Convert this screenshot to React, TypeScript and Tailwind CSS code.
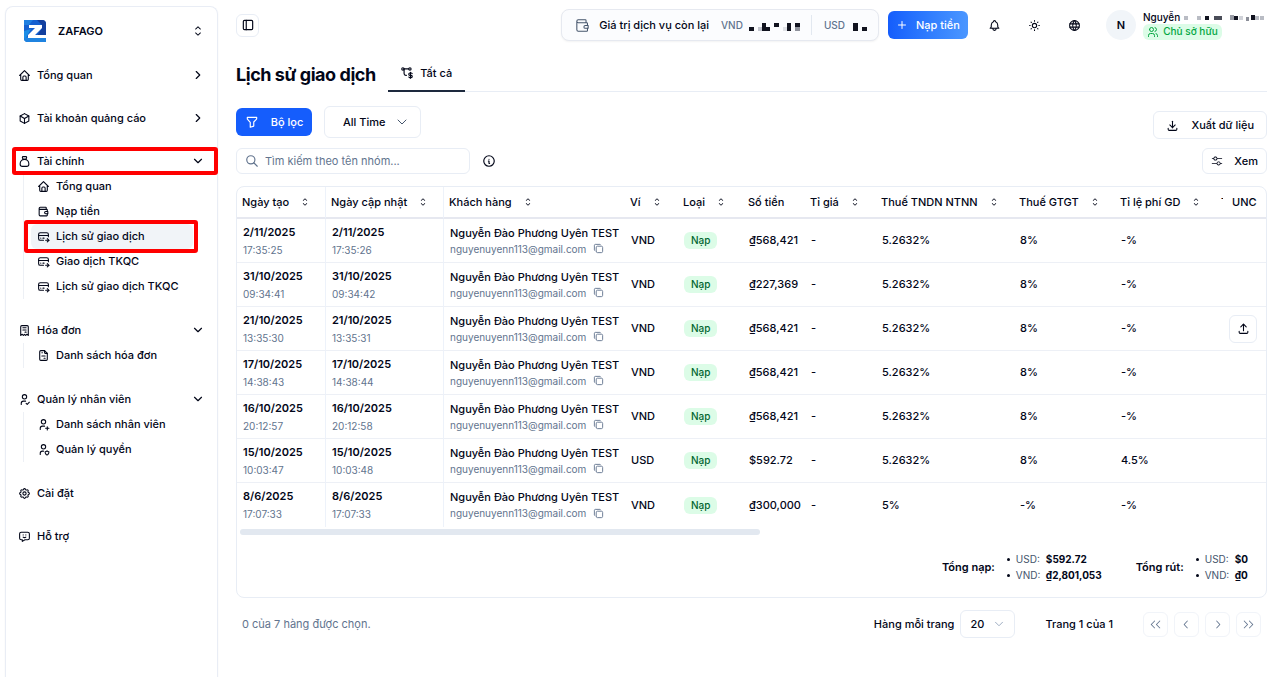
import type { FC, ReactNode } from 'react';
import type { IconType } from 'react-icons';
import {
  TbBell,
  TbBox,
  TbChevronDown,
  TbChevronRight,
  TbCopy,
  TbCreditCardPay,
  TbDownload,
  TbFileInvoice,
  TbFilter,
  TbHome,
  TbInfoCircle,
  TbLayoutSidebar,
  TbMessageChatbot,
  TbMoneybag,
  TbPlus,
  TbReceipt,
  TbSearch,
  TbSettings,
  TbSun,
  TbTransactionDollar,
  TbUpload,
  TbUserCheck,
  TbUserPlus,
  TbUserShield,
  TbUsers,
  TbWallet,
  TbWorld,
} from 'react-icons/tb';
import { RxCaretSort, RxChevronLeft, RxChevronRight, RxDoubleArrowLeft, RxDoubleArrowRight, RxMixerHorizontal } from 'react-icons/rx';

interface NavChild {
  label: string;
  icon: IconType;
  active?: boolean;
}

interface NavGroup {
  label: string;
  icon: IconType;
  arrow?: 'right' | 'down';
  marked?: boolean;
  children?: NavChild[];
}

const navGroups: NavGroup[] = [
  { label: 'Tổng quan', icon: TbHome, arrow: 'right' },
  { label: 'Tài khoản quảng cáo', icon: TbBox, arrow: 'right' },
  {
    label: 'Tài chính',
    icon: TbMoneybag,
    arrow: 'down',
    marked: true,
    children: [
      { label: 'Tổng quan', icon: TbHome },
      { label: 'Nạp tiền', icon: TbWallet },
      { label: 'Lịch sử giao dịch', icon: TbCreditCardPay, active: true },
      { label: 'Giao dịch TKQC', icon: TbCreditCardPay },
      { label: 'Lịch sử giao dịch TKQC', icon: TbCreditCardPay },
    ],
  },
  { label: 'Hóa đơn', icon: TbReceipt, arrow: 'down', children: [{ label: 'Danh sách hóa đơn', icon: TbFileInvoice }] },
  {
    label: 'Quản lý nhân viên',
    icon: TbUserCheck,
    arrow: 'down',
    children: [
      { label: 'Danh sách nhân viên', icon: TbUserPlus },
      { label: 'Quản lý quyền', icon: TbUserShield },
    ],
  },
  { label: 'Cài đặt', icon: TbSettings },
  { label: 'Hỗ trợ', icon: TbMessageChatbot },
];

interface Transaction {
  date: string;
  created: string;
  updated: string;
  wallet: string;
  amount: string;
  tax: string;
  vat: string;
  fee: string;
  upload?: boolean;
}

const transactions: Transaction[] = [
  { date: '2/11/2025', created: '17:35:25', updated: '17:35:26', wallet: 'VND', amount: '₫568,421', tax: '5.2632%', vat: '8%', fee: '-%' },
  { date: '31/10/2025', created: '09:34:41', updated: '09:34:42', wallet: 'VND', amount: '₫227,369', tax: '5.2632%', vat: '8%', fee: '-%' },
  { date: '21/10/2025', created: '13:35:30', updated: '13:35:31', wallet: 'VND', amount: '₫568,421', tax: '5.2632%', vat: '8%', fee: '-%', upload: true },
  { date: '17/10/2025', created: '14:38:43', updated: '14:38:44', wallet: 'VND', amount: '₫568,421', tax: '5.2632%', vat: '8%', fee: '-%' },
  { date: '16/10/2025', created: '20:12:57', updated: '20:12:58', wallet: 'VND', amount: '₫568,421', tax: '5.2632%', vat: '8%', fee: '-%' },
  { date: '15/10/2025', created: '10:03:47', updated: '10:03:48', wallet: 'USD', amount: '$592.72', tax: '5.2632%', vat: '8%', fee: '4.5%' },
  { date: '8/6/2025', created: '17:07:33', updated: '17:07:33', wallet: 'VND', amount: '₫300,000', tax: '5%', vat: '-%', fee: '-%' },
];

const columns = [
  { label: 'Ngày tạo', sort: true, width: 'w-[89px]', divider: true },
  { label: 'Ngày cập nhật', sort: true, width: 'w-[118px]', divider: true },
  { label: 'Khách hàng', sort: true, width: 'w-[181px]' },
  { label: 'Ví', sort: true, width: 'w-[53px]' },
  { label: 'Loại', sort: true, width: 'w-[65px]' },
  { label: 'Số tiền', sort: false, width: 'w-[62px]' },
  { label: 'Tỉ giá', sort: true, width: 'w-[71px]' },
  { label: 'Thuế TNDN NTNN', sort: true, width: 'w-[138px]' },
  { label: 'Thuế GTGT', sort: true, width: 'w-[101px]' },
  { label: 'Tỉ lệ phí GD', sort: true, width: 'w-[101px]' },
];

const Logo: FC = () => (
  <svg viewBox="0 0 24 24" className="size-6" aria-hidden="true">
    <path d="M1 1h18a4 4 0 0 1 4 4v18H5a4 4 0 0 1-4-4z" fill="#1560d0" />
    <path d="M1 1h9L6 6H1z" fill="#1f7fe0" />
    <path d="M1 12l7-2-5 9 2 4a4 4 0 0 1-4-4z" fill="#1b8de6" />
    <path d="M5 23a4 4 0 0 1-4-4l5-1h17v5z" fill="#1f83e0" />
    <path d="M14 1h5a4 4 0 0 1 4 4v12h-9l5-8V6z" fill="#123f9e" />
    <path d="M6 6h13v3l-7 7h11v3H5v-3l7-7H6z" fill="#fff" />
  </svg>
);

// Pixelated blocks that hide private values
const Mosaic: FC<{ blocks: [number, number, number, number, string][]; className: string; viewBox: string }> = ({
  blocks,
  className,
  viewBox,
}) => (
  <svg viewBox={viewBox} className={className} shapeRendering="crispEdges" aria-hidden="true">
    {blocks.map(([x, y, w, h, fill]) => (
      <rect key={`${x}-${y}`} x={x} y={y} width={w} height={h} fill={fill} />
    ))}
  </svg>
);

const Marker: FC<{ className: string }> = ({ className }) => (
  <span className={`pointer-events-none absolute z-10 rounded-[3px] border-4 border-[#ff0000] ${className}`} />
);

const Sidebar: FC = () => (
  <aside className="w-[218px] shrink-0 pl-[5px] pt-1.5">
    <div className="h-full rounded-t-lg border border-b-0 border-[#e9edf5] px-2 shadow-xs">
      <button type="button" className="flex h-12 w-full items-center pl-[9px] pr-[3px]">
        <Logo />
        <span className="ml-[11px] flex-1 text-left text-[11px] font-semibold">ZAFAGO</span>
        <RxCaretSort className="size-4" />
      </button>
      <nav className="mt-2">
        <ul className="flex flex-col gap-[19px]">
          {navGroups.map((group) => (
            <li key={group.label}>
              <button type="button" className="relative flex h-6 w-full items-center pl-1 pr-1 text-[11px] font-medium">
                {group.marked && <Marker className="-left-0.5 -right-[9px] -top-0.5 -bottom-0.5" />}
                <group.icon className="size-[13px]" />
                <span className="ml-1.5 flex-1 text-left">{group.label}</span>
                {group.arrow === 'right' && <TbChevronRight className="size-[14px]" />}
                {group.arrow === 'down' && <TbChevronDown className="size-[14px]" />}
              </button>
              {group.children && (
                <ul className="ml-[9px] mt-px border-l border-[#edf0f5] pl-[7px] pr-4">
                  {group.children.map((child) => (
                    <li key={child.label} className="relative">
                      {child.active && <Marker className="-left-[7px] -right-[5px] -top-1 -bottom-1" />}
                      <a
                        href="#"
                        className={`flex h-[25px] items-center gap-1.5 rounded-md pl-1.5 text-[11px] font-medium ${child.active ? 'bg-[#f1f4f8]' : ''}`}
                      >
                        <child.icon className="size-[13px] shrink-0" />
                        <span className="whitespace-nowrap">{child.label}</span>
                      </a>
                    </li>
                  ))}
                </ul>
              )}
            </li>
          ))}
        </ul>
      </nav>
    </div>
  </aside>
);

const TopBar: FC = () => (
  <header className="flex h-[50px] items-center">
    <button type="button" className="flex size-[23px] items-center justify-center rounded-md border border-[#e8edf5]" title="Thu gọn">
      <TbLayoutSidebar className="size-[14px]" />
    </button>
    <div className="ml-auto flex h-8 items-center rounded-lg border border-[#e6e9f0] bg-[#fbfcfe] pl-3 pr-[11px] shadow-xs">
      <TbWallet className="size-[17px] text-slate-600" strokeWidth={1.5} />
      <span className="ml-2 text-[11px] font-medium">Giá trị dịch vụ còn lại</span>
      <span className="ml-3 text-[10px] font-medium text-slate-500">VND</span>
      <Mosaic
        className="ml-1.5 h-3 w-[52px]"
        viewBox="0 0 52 12"
        blocks={[
          [0, 8, 5, 4, '#11131f'],
          [9, 8, 4, 4, '#c3c6cf'],
          [13, 4, 4, 8, '#11131f'],
          [17, 8, 4, 4, '#11131f'],
          [25, 4, 5, 4, '#11131f'],
          [34, 8, 4, 4, '#dfe1e6'],
          [38, 4, 4, 8, '#11131f'],
          [46, 4, 5, 4, '#11131f'],
          [46, 8, 5, 4, '#8f929c'],
        ]}
      />
      <span className="ml-2.5 h-5 w-px bg-slate-200" />
      <span className="ml-3 text-[10px] font-medium text-slate-500">USD</span>
      <Mosaic
        className="ml-2 h-3 w-[14px]"
        viewBox="0 0 14 12"
        blocks={[
          [0, 4, 5, 8, '#11131f'],
          [9, 8, 5, 4, '#11131f'],
        ]}
      />
    </div>
    <button
      type="button"
      className="ml-[9px] flex h-7 w-20 items-center justify-center gap-2 rounded-md bg-gradient-to-r from-[#155dfc] to-[#4b97ff] text-[11px] font-medium text-white"
    >
      <TbPlus className="size-3" />
      Nạp tiền
    </button>
    <div className="ml-5 flex items-center gap-[27px]">
      <button type="button" title="Thông báo">
        <TbBell className="size-[13px]" />
      </button>
      <button type="button" title="Giao diện">
        <TbSun className="size-[13px]" />
      </button>
      <button type="button" title="Ngôn ngữ">
        <TbWorld className="size-[13px]" />
      </button>
    </div>
    <div className="ml-[25px] flex w-[161px] items-center gap-[7px]">
      <span className="flex size-[30px] shrink-0 items-center justify-center rounded-full bg-slate-100 text-[11px] font-semibold">N</span>
      <div>
        <div className="flex h-[13px] items-center text-[10px] font-medium">
          Nguyễn
          <Mosaic
            className="ml-1 h-2 w-20"
            viewBox="0 0 80 8"
            blocks={[
              [0, 3, 4, 4, '#b9bcc4'],
              [13, 3, 4, 4, '#b9bcc4'],
              [21, 3, 4, 4, '#11131f'],
              [30, 3, 8, 4, '#4a4d58'],
              [46, 2, 4, 5, '#9a9da6'],
              [50, 3, 4, 4, '#11131f'],
              [55, 3, 4, 4, '#d0d2d8'],
              [62, 4, 3, 4, '#8b8e98'],
              [67, 2, 4, 5, '#11131f'],
              [71, 3, 4, 4, '#b9bcc4'],
              [76, 3, 4, 4, '#b9bcc4'],
            ]}
          />
        </div>
        <span className="flex h-4 w-[79px] items-center justify-center gap-1 rounded-md bg-[#dcfce7] text-[10px] font-medium text-green-600">
          <TbUsers className="size-3" />
          Chủ sở hữu
        </span>
      </div>
    </div>
  </header>
);

const OutlineButton: FC<{ className: string; children: ReactNode }> = ({ className, children }) => (
  <button type="button" className={`flex items-center rounded-md border border-[#e8edf5] text-[11px] font-medium ${className}`}>
    {children}
  </button>
);

const Toolbar: FC = () => (
  <div className="mt-3.5 flex justify-between">
    <div>
      <div className="flex h-8 items-center gap-3">
        <button type="button" className="flex h-7 w-[76px] items-center justify-center gap-3 rounded-md bg-[#155dfc] text-[11px] font-medium text-white">
          <TbFilter className="size-[14px]" />
          Bộ lọc
        </button>
        <label className="flex h-8 w-[97px] items-center rounded-md border border-[#e8edf5] pl-[18px] pr-2.5">
          <select className="flex-1 appearance-none bg-transparent text-[11px] font-medium outline-none" aria-label="Khoảng thời gian">
            <option>All Time</option>
          </select>
          <TbChevronDown className="size-4 text-slate-600" strokeWidth={1.5} />
        </label>
      </div>
      <div className="mt-2.5 flex items-center gap-3">
        <label className="flex h-[26px] w-[234px] items-center gap-1.5 rounded-md border border-[#e8edf5] pl-2">
          <TbSearch className="size-[14px] text-slate-500" />
          <input
            type="text"
            aria-label="Tìm kiếm"
            placeholder="Tìm kiếm theo tên nhóm..."
            className="min-w-0 flex-1 text-[11px] outline-none placeholder:text-slate-500"
          />
        </label>
        <TbInfoCircle className="size-[14px]" />
      </div>
    </div>
    <div className="flex flex-col items-end gap-[9px] pt-[5px]">
      <OutlineButton className="h-7 gap-3 px-3">
        <TbDownload className="size-[13px]" />
        Xuất dữ liệu
      </OutlineButton>
      <OutlineButton className="h-[26px] gap-[11px] px-2">
        <RxMixerHorizontal className="size-3" />
        Xem
      </OutlineButton>
    </div>
  </div>
);

const Totals: FC<{ label: string; usd: string; vnd: string }> = ({ label, usd, vnd }) => (
  <div className="flex items-center gap-3 text-[11px] font-semibold">
    {label}
    <ul className="text-[10px] leading-4">
      <li className="flex items-center gap-1.5">
        <span className="size-[3px] rounded-full bg-slate-950" />
        <span className="w-6 font-normal text-slate-600">USD:</span>
        <span className="font-bold">{usd}</span>
      </li>
      <li className="flex items-center gap-1.5">
        <span className="size-[3px] rounded-full bg-slate-950" />
        <span className="w-6 font-normal text-slate-600">VND:</span>
        <span className="font-bold">{vnd}</span>
      </li>
    </ul>
  </div>
);

const TransactionTable: FC = () => (
  <table className="w-full table-fixed border-separate border-spacing-0 text-left text-[11px]">
    <thead>
      <tr>
        {columns.map((col) => (
          <th
            key={col.label}
            className={`h-8 whitespace-nowrap border-b-2 border-b-[#e6e8f0] p-0 pl-[5px] font-medium ${col.width} ${col.divider ? 'border-r border-r-[#edf2fa]' : ''}`}
          >
            <span className="flex items-center gap-[10px]">
              {col.label}
              {col.sort && <RxCaretSort className="size-3" />}
            </span>
          </th>
        ))}
        <th className="w-[7px] overflow-hidden border-b-2 border-[#e6e8f0] p-0 pl-[5px] font-medium">
          <span className="block overflow-hidden">T</span>
        </th>
        <th className="w-[43px] border-b-2 border-[#e6e8f0] p-0 pl-[9px] font-medium">UNC</th>
      </tr>
    </thead>
    <tbody className="[&_td]:h-11 [&_td]:border-b [&_td]:border-b-[#edf0f6] [&_td]:p-0 [&_td]:pl-1.5 [&_tr:last-child_td]:border-b-0">
      {transactions.map((row) => (
        <tr key={row.date} className="font-medium">
          <td className="border-r border-r-[#edf2fa] leading-[18px]">
            <div className="font-semibold">{row.date}</div>
            <div className="text-[10px] font-normal leading-[18px] text-slate-500">{row.created}</div>
          </td>
          <td className="border-r border-r-[#edf2fa] leading-[18px]">
            <div className="font-semibold">{row.date}</div>
            <div className="text-[10px] font-normal leading-[18px] text-slate-500">{row.updated}</div>
          </td>
          <td className="whitespace-nowrap leading-4">
            <div>Nguyễn Đào Phương Uyên TEST</div>
            <div className="flex items-center gap-[7px] text-[10px] font-normal leading-4 text-slate-500">
              nguyenuyenn113@gmail.com
              <button type="button" title="Sao chép">
                <TbCopy className="size-[11px]" />
              </button>
            </div>
          </td>
          <td>{row.wallet}</td>
          <td>
            <span className="inline-flex h-[17px] items-center rounded-md bg-[#dcfce7] px-[7px] text-[10px] font-medium text-green-800">Nạp</span>
          </td>
          <td>{row.amount}</td>
          <td>-</td>
          <td>{row.tax}</td>
          <td>{row.vat}</td>
          <td>{row.fee}</td>
          <td />
          <td>
            {row.upload && (
              <button type="button" className="flex size-7 items-center justify-center rounded-md border border-[#e8edf5]" title="Tải lên">
                <TbUpload className="size-[13px]" />
              </button>
            )}
          </td>
        </tr>
      ))}
    </tbody>
  </table>
);

const Pager: FC = () => (
  <div className="mt-3 flex h-7 items-center text-[11px] font-medium">
    <span className="pl-1.5 font-normal text-slate-500">0 của 7 hàng được chọn.</span>
    <label className="ml-auto flex items-center gap-1.5">
      Hàng mỗi trang
      <span className="flex h-7 w-[55px] items-center rounded-md border border-[#e8edf5] pl-[9px] pr-2">
        <select className="flex-1 appearance-none bg-transparent outline-none">
          <option>20</option>
        </select>
        <TbChevronDown className="size-[14px] text-slate-400" strokeWidth={1.5} />
      </span>
    </label>
    <span className="ml-[30px]">Trang 1 của 1</span>
    <div className="ml-[30px] mr-1.5 flex gap-1.5">
      {[RxDoubleArrowLeft, RxChevronLeft, RxChevronRight, RxDoubleArrowRight].map((Icon, i) => (
        <button key={i} type="button" disabled className="flex size-[25px] items-center justify-center rounded-md border border-[#f1f4f9] text-slate-500">
          <Icon className="size-[13px]" />
        </button>
      ))}
    </div>
  </div>
);

const App: FC = () => (
  <div className="flex min-h-screen bg-white font-['Inter',sans-serif] text-slate-950">
    <Sidebar />
    <main className="min-w-0 flex-1 pl-[18px] pr-[13px]">
      <TopBar />
      <div className="mt-1 flex h-[38px] items-stretch gap-3">
        <h1 className="flex items-center pt-1 text-lg font-bold tracking-tight">Lịch sử giao dịch</h1>
        <div className="flex flex-1 items-stretch">
          <button type="button" className="flex w-[77px] items-center justify-center gap-1.5 border-b-2 border-slate-800 pt-0.5 text-[11px] font-medium">
            <TbTransactionDollar className="size-[14px]" />
            Tất cả
          </button>
          <div className="flex-1 border-b border-[#e8edf5]" />
        </div>
      </div>
      <Toolbar />
      <section className="mt-3 rounded-lg border border-[#e8edf5]">
        <TransactionTable />
        <div className="mx-[3px] mt-0.5 h-1.5 w-[520px] rounded-full bg-slate-200" />
        <div className="flex justify-end gap-[34px] pb-3.5 pr-[18px] pt-4">
          <Totals label="Tổng nạp:" usd="$592.72" vnd="₫2,801,053" />
          <Totals label="Tổng rút:" usd="$0" vnd="₫0" />
        </div>
      </section>
      <Pager />
    </main>
  </div>
);

export default App;
